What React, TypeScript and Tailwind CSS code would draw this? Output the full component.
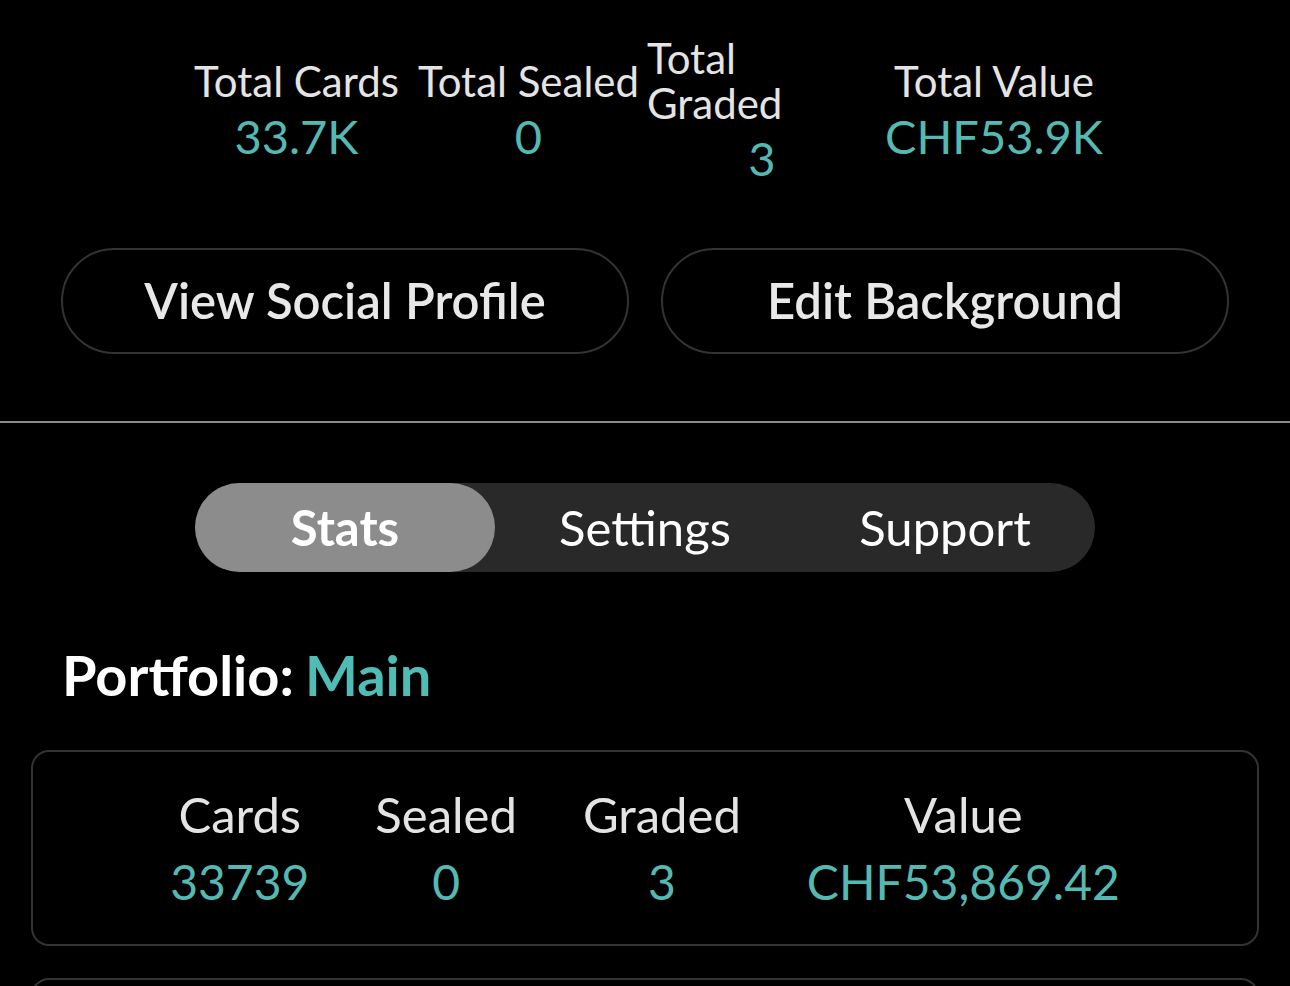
const teal = "text-[#55b9b3]";

function TopStat({ label, value, className }: { label: string; value: string; className?: string }) {
  return (
    <div className={`flex flex-col items-center ${className ?? ""}`}>
      <p className="whitespace-nowrap text-[42px] leading-[45px] text-[#e4e4e4]">{label}</p>
      <p className={`mt-[4px] text-[47px] leading-[56px] ${teal}`}>{value}</p>
    </div>
  );
}

function CardStat({ label, value }: { label: string; value: string }) {
  return (
    <div className="flex flex-col items-center">
      <p className="text-[49px] leading-[56px] text-[#e4e4e4]">{label}</p>
      <p className={`mt-[12px] text-[48px] leading-[56px] ${teal}`}>{value}</p>
    </div>
  );
}

export default function App() {
  return (
    <div
      className="h-[986px] w-[1290px] overflow-hidden bg-black text-white"
      style={{ fontFamily: "Lato, 'Noto Sans', sans-serif" }}
    >
      <div className="flex items-center pl-[194px] pt-[36px]">
        <TopStat label="Total Cards" value="33.7K" className="w-[205px]" />
        <TopStat label="Total Sealed" value="0" className="ml-[21px] w-[217px]" />
        <div className="ml-[10px] flex w-[230px] flex-col">
          <p className="w-[140px] text-[42px] leading-[45px] text-[#e4e4e4]">Total Graded</p>
          <p className={`mt-[4px] text-center text-[47px] leading-[56px] ${teal}`}>3</p>
        </div>
        <TopStat label="Total Value" value="CHF53.9K" className="ml-[7px] w-[220px]" />
      </div>

      <div className="mt-[62px] flex gap-[32px] px-[61px]">
        <button className="h-[106px] flex-1 rounded-full border-2 border-[#333333] text-[49px] font-semibold text-[#e8e8e8]">
          View Social Profile
        </button>
        <button className="h-[106px] flex-1 rounded-full border-2 border-[#333333] text-[49px] font-semibold text-[#e8e8e8]">
          Edit Background
        </button>
      </div>

      <div className="mt-[67px] h-[2px] bg-[#8a8a8a]" />

      <div className="mt-[60px] flex justify-center">
        <div className="flex h-[89px] w-[900px] rounded-full bg-[#292929]">
          <div className="flex w-[300px] items-center justify-center rounded-full bg-[#8c8c8c] text-[49px] font-bold text-white">
            Stats
          </div>
          <div className="flex w-[300px] items-center justify-center text-[49px] text-white">Settings</div>
          <div className="flex w-[300px] items-center justify-center text-[49px] text-white">Support</div>
        </div>
      </div>

      <h2 className="mt-[71px] pl-[62px] text-[56px] font-bold leading-[64px] text-white">
        Portfolio:<span className="ml-[11px] text-[#4fbcb6]">Main</span>
      </h2>

      <div className="mx-[31px] mt-[43px] flex h-[196px] items-center justify-center gap-[66px] rounded-[18px] border-2 border-[#333333]">
        <CardStat label="Cards" value="33739" />
        <CardStat label="Sealed" value="0" />
        <CardStat label="Graded" value="3" />
        <CardStat label="Value" value="CHF53,869.42" />
      </div>

      <div className="mx-[31px] mt-[32px] h-[196px] rounded-[18px] border-2 border-[#333333]" />
    </div>
  );
}
